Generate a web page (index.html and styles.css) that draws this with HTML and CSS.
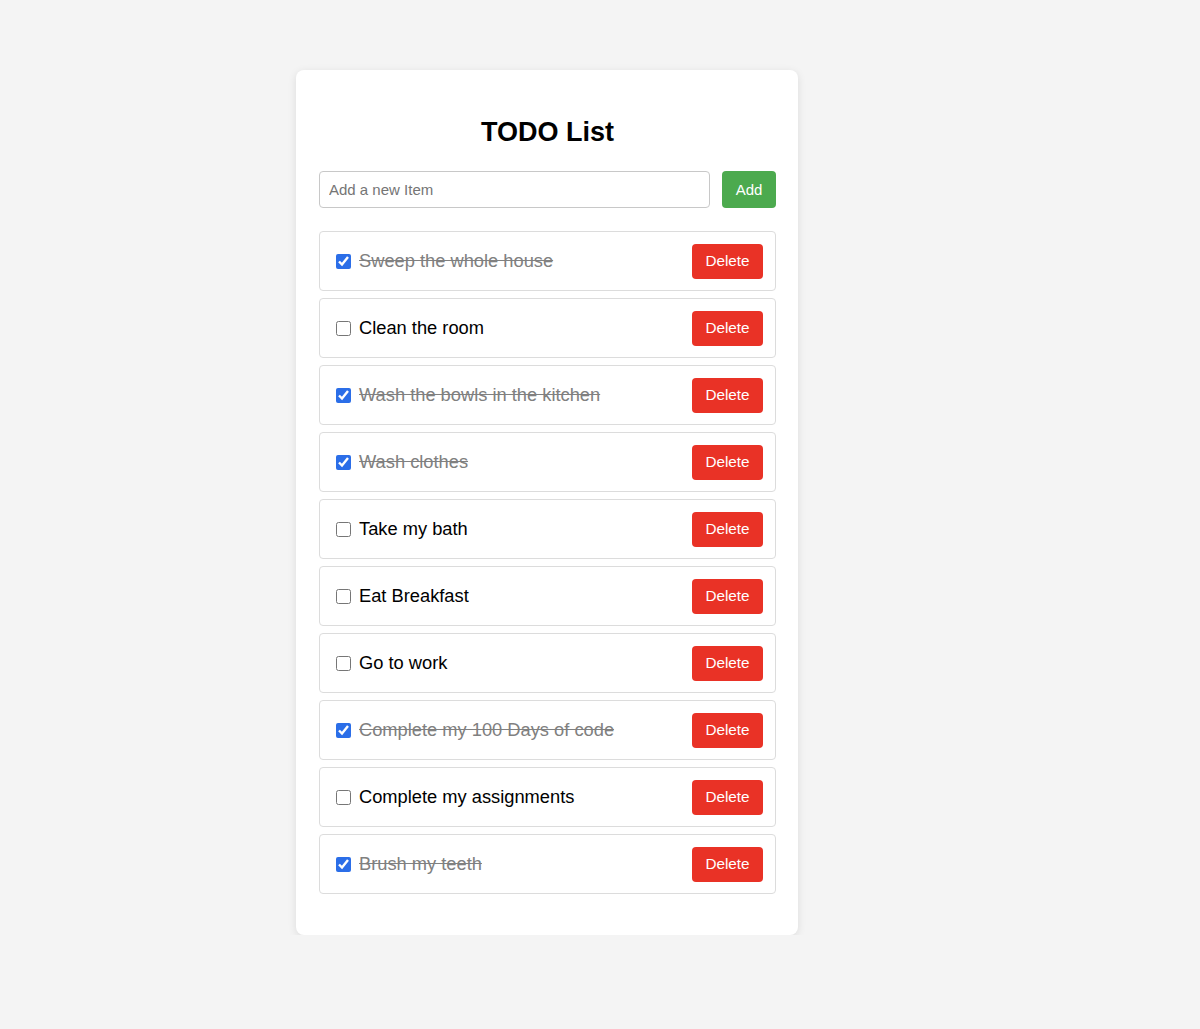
FILE: index.html
```html
<!DOCTYPE html>
<html lang="en">
<head>
<meta charset="utf-8">
<title>TODO List</title>
<link rel="stylesheet" href="styles.css">
</head>
<body>
<div class="page">
  <div class="card">
    <h1 class="title">TODO List</h1>
    <div class="add-row">
      <input class="add-input" type="text" placeholder="Add a new Item">
      <button class="add-btn">Add</button>
    </div>
    <ul class="list">
      <li class="item done"><input type="checkbox" class="check" checked><span class="label">Sweep the whole house</span><button class="del-btn">Delete</button></li>
      <li class="item"><input type="checkbox" class="check"><span class="label">Clean the room</span><button class="del-btn">Delete</button></li>
      <li class="item done"><input type="checkbox" class="check" checked><span class="label">Wash the bowls in the kitchen</span><button class="del-btn">Delete</button></li>
      <li class="item done"><input type="checkbox" class="check" checked><span class="label">Wash clothes</span><button class="del-btn">Delete</button></li>
      <li class="item"><input type="checkbox" class="check"><span class="label">Take my bath</span><button class="del-btn">Delete</button></li>
      <li class="item"><input type="checkbox" class="check"><span class="label">Eat Breakfast</span><button class="del-btn">Delete</button></li>
      <li class="item"><input type="checkbox" class="check"><span class="label">Go to work</span><button class="del-btn">Delete</button></li>
      <li class="item done"><input type="checkbox" class="check" checked><span class="label">Complete my 100 Days of code</span><button class="del-btn">Delete</button></li>
      <li class="item"><input type="checkbox" class="check"><span class="label">Complete my assignments</span><button class="del-btn">Delete</button></li>
      <li class="item done"><input type="checkbox" class="check" checked><span class="label">Brush my teeth</span><button class="del-btn">Delete</button></li>
    </ul>
  </div>
</div>
</body>
</html>
```
FILE: styles.css
```css
html, body {
  margin: 0;
  padding: 0;
  background: #f4f4f4;
  font-family: "Liberation Sans", Arial, sans-serif;
}

.page {
  padding-top: 70px;
  padding-left: 296px;
}

.card {
  width: 502px;
  box-sizing: border-box;
  background: #ffffff;
  border-radius: 8px;
  box-shadow: 0 2px 8px rgba(0, 0, 0, 0.1);
  padding: 22px 22px 41px 23px;
}

.title {
  margin: 25px 0 23px 0;
  text-align: center;
  font-size: 27px;
  line-height: 31px;
  font-weight: bold;
  color: #000;
}

.add-row {
  display: flex;
  gap: 12px;
  height: 37px;
}

.add-input {
  flex: 1;
  box-sizing: border-box;
  height: 37px;
  border: 1px solid #c8c8c8;
  border-radius: 4px;
  padding: 0 9px;
  font-family: "Liberation Sans", Arial, sans-serif;
  font-size: 15px;
  color: #333;
  outline: none;
}

.add-input::placeholder {
  color: #757575;
}

.add-btn {
  width: 54px;
  height: 37px;
  border: none;
  border-radius: 4px;
  background: #4caa4e;
  color: #fff;
  font-family: "Liberation Sans", Arial, sans-serif;
  font-size: 15px;
  padding: 0;
  cursor: pointer;
}

.list {
  list-style: none;
  margin: 23px 0 0 0;
  padding: 0;
  display: flex;
  flex-direction: column;
  gap: 7px;
}

.item {
  display: flex;
  align-items: center;
  box-sizing: border-box;
  height: 60px;
  border: 1px solid #dcdcdc;
  border-radius: 4px;
  padding: 0 12px;
}

.check {
  width: 15px;
  height: 15px;
  margin: 0 8px 0 4px;
  accent-color: #2b6ee8;
}

.label {
  flex: 1;
  font-size: 18.3px;
  color: #000;
}

.item.done .label {
  color: #808080;
  text-decoration: line-through;
}

.del-btn {
  width: 71px;
  height: 35px;
  border: none;
  border-radius: 4px;
  background: #e93226;
  color: #fff;
  font-family: "Liberation Sans", Arial, sans-serif;
  font-size: 15.3px;
  padding: 0;
  cursor: pointer;
}
```
